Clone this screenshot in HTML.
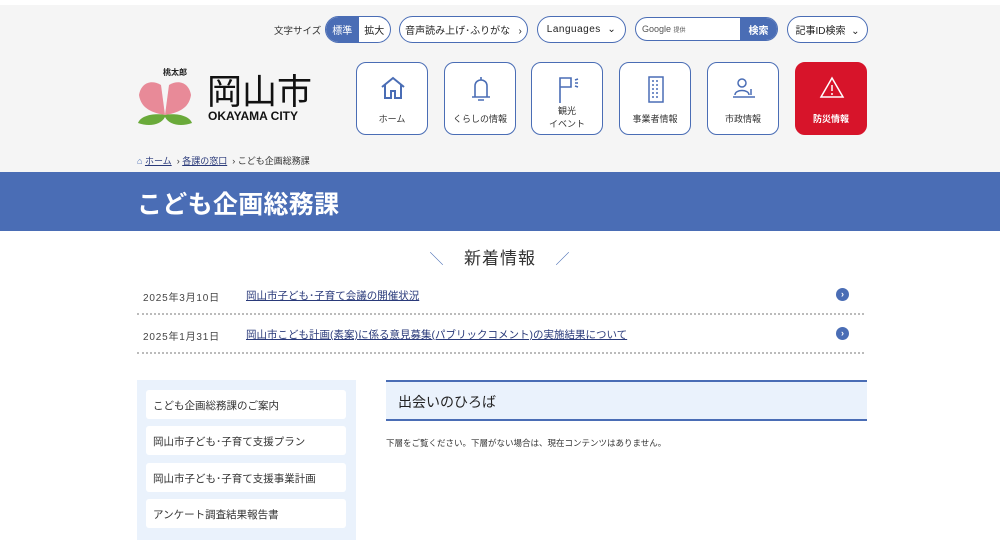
<!DOCTYPE html>
<html><head><meta charset="utf-8"><style>
*{box-sizing:border-box;margin:0;padding:0}
body{width:1000px;height:540px;overflow:hidden;background:#fff;font-family:"Liberation Sans","Noto Sans CJK JP",sans-serif;color:#333;position:relative}
.a{position:absolute}
.hdr{left:0;top:5px;width:1000px;height:167px;background:#f5f5f5}
.pill{position:absolute;top:16px;height:27px;border:1px solid #4a6db5;border-radius:14px;background:#fff;font-size:10px;color:#222;display:flex;align-items:center;justify-content:center}
.nav{position:absolute;top:62px;width:72px;height:73px;border:1.5px solid #4a6db5;border-radius:10px;background:#fff;font-size:9px;color:#333;text-align:center}
.nav svg{position:absolute;left:23px;top:12px}
.nav span{position:absolute;left:0;right:0;top:49px}
.band{left:0;top:172px;width:1000px;height:59px;background:#4a6db5;color:#fff;font-size:25px;font-weight:bold;padding:13px 0 0 137px;letter-spacing:.3px}
.news{left:137px;width:727px;height:39px;border-bottom:2px dotted #bbb;font-size:10px}
.news .d{position:absolute;left:6px;top:13px;letter-spacing:.8px;color:#444}
.news .t{position:absolute;left:109px;top:12px;text-decoration:underline;font-size:10.5px;color:#2a3a7a}
.news .c{position:absolute;right:15px;top:12px;width:13px;height:13px;border-radius:50%;background:#4a6db5;color:#fff;font-size:9px;line-height:13px;text-align:center;font-weight:bold}
.side{left:137px;top:380px;width:219px;height:160px;background:#eaf2fc}
.si{position:absolute;left:9px;width:200px;height:29px;background:#fff;border-radius:3px;font-size:10.5px;padding:8px 0 0 7px;color:#333}
</style></head><body>
<div class="a hdr"></div>
<div class="a" style="left:274px;top:23px;font-size:9.5px">文字サイズ</div>
<div class="pill" style="left:325px;width:66px;justify-content:flex-start;overflow:hidden"><div style="width:33px;height:100%;background:#4a6db5;color:#fff;display:flex;align-items:center;justify-content:center">標準</div><div style="width:32px;text-align:center">拡大</div></div>
<div class="pill" style="left:399px;width:129px">音声読み上げ･ふりがな&nbsp;&nbsp;&nbsp;›</div>
<div class="pill" style="left:537px;width:89px;letter-spacing:.5px">Languages&nbsp;&nbsp;⌄</div>
<div class="pill" style="left:635px;width:143px;justify-content:flex-start;overflow:hidden;height:24px;top:17px"><span style="flex:1;padding-left:6px;font-size:9px;color:#555">Google <span style="font-size:6px">提供</span></span><span style="width:37px;height:100%;background:#4a6db5;color:#fff;display:flex;align-items:center;justify-content:center;font-weight:bold">検索</span></div>
<div class="pill" style="left:787px;width:81px">記事ID検索&nbsp;&nbsp;⌄</div>

<svg class="a" style="left:135px;top:65px" width="60" height="66" viewBox="0 0 60 66">
<path d="M4 30 C6 18 16 14 26 20 L30 50 C18 48 6 44 4 30Z" fill="#e88a98"/>
<path d="M56 30 C54 18 44 14 34 20 L30 50 C42 48 54 44 56 30Z" fill="#e88a98"/>
<path d="M30 50 C20 48 6 50 3 58 C14 62 26 60 30 52Z" fill="#6aaa3a"/>
<path d="M30 50 C40 48 54 50 57 58 C46 62 34 60 30 52Z" fill="#6aaa3a"/>
<text x="28" y="10" font-size="8" font-weight="bold" fill="#222">桃太郎</text>
</svg>
<div class="a" style="left:207px;top:71px;font-size:35px;line-height:38px;color:#111;font-family:'Noto Sans CJK JP',sans-serif">岡山市</div>
<div class="a" style="left:208px;top:109px;font-size:12px;font-weight:bold;color:#111">OKAYAMA CITY</div>

<div class="nav" style="left:356px"><svg width="26" height="26" viewBox="0 0 26 26" fill="none" stroke="#4a6db5" stroke-width="2"><path d="M2 12 L13 3 L24 12 M5 10 V23 H11 V16 H15 V23 H21 V10"/></svg><span>ホーム</span></div>
<div class="nav" style="left:444px"><svg width="26" height="30" viewBox="0 0 26 30" fill="none" stroke="#4a6db5" stroke-width="1.6"><path d="M13 2 V5 M7 22 V11 C7 7 10 5 13 5 C16 5 19 7 19 11 V22 M4 22 H22 M10 25 H16"/></svg><span>くらしの情報</span></div>
<div class="nav" style="left:531px"><svg width="26" height="30" viewBox="0 0 26 30" fill="none" stroke="#4a6db5" stroke-width="1.6"><path d="M5 28 V3 H16 V12 H5 M20 5 L23 4 M20 8 H23 M20 11 L23 12"/></svg><span style="top:42px;line-height:13px">観光<br>イベント</span></div>
<div class="nav" style="left:619px"><svg width="26" height="30" viewBox="0 0 26 30" fill="none" stroke="#4a6db5" stroke-width="1.5"><rect x="6" y="2" width="14" height="25"/><path d="M9 6h2M13 6h2M9 10h2M13 10h2M9 14h2M13 14h2M9 18h2M13 18h2M9 22h2M13 22h2"/></svg><span>事業者情報</span></div>
<div class="nav" style="left:707px"><svg width="26" height="30" viewBox="0 0 26 30" fill="none" stroke="#4a6db5" stroke-width="1.5"><circle cx="11" cy="8" r="4"/><path d="M4 20 C4 14 18 14 18 20 M2 22 H24 M20 14 V20"/></svg><span>市政情報</span></div>
<div class="nav" style="left:795px;background:#d7142a;border-color:#d7142a;color:#fff;font-weight:bold"><svg width="26" height="26" viewBox="0 0 26 26" fill="none" stroke="#fff" stroke-width="1.5"><path d="M13 3 L24 22 H2 Z M13 10 V16 M13 18 V20"/></svg><span>防災情報</span></div>

<div class="a" style="left:137px;top:154px;font-size:9px;color:#333"><span style="color:#4a6db5">⌂</span> <u style="color:#2a3a7a">ホーム</u> &nbsp;› <u style="color:#2a3a7a">各課の窓口</u> &nbsp;› こども企画総務課</div>
<div class="a band">こども企画総務課</div>

<div class="a" style="left:0;width:1000px;top:244px;text-align:center;font-size:17px;color:#333;letter-spacing:1px"><span style="color:#4a6db5;font-size:14px">＼&nbsp;&nbsp;&nbsp;&nbsp;</span>新着情報<span style="color:#4a6db5;font-size:14px">&nbsp;&nbsp;&nbsp;&nbsp;／</span></div>
<div class="a news" style="top:276px"><span class="d">2025年3月10日</span><span class="t">岡山市子ども･子育て会議の開催状況</span><span class="c">›</span></div>
<div class="a news" style="top:315px"><span class="d">2025年1月31日</span><span class="t">岡山市こども計画(素案)に係る意見募集(パブリックコメント)の実施結果について</span><span class="c">›</span></div>

<div class="a side">
<div class="si" style="top:10px">こども企画総務課のご案内</div>
<div class="si" style="top:46px">岡山市子ども･子育て支援プラン</div>
<div class="si" style="top:83px">岡山市子ども･子育て支援事業計画</div>
<div class="si" style="top:119px">アンケート調査結果報告書</div>
</div>
<div class="a" style="left:386px;top:380px;width:481px;height:41px;background:#eaf2fc;border-top:2px solid #4a6db5;border-bottom:2px solid #4a6db5;font-size:14px;padding:10px 0 0 12px;color:#222">出会いのひろば</div>
<div class="a" style="left:386px;top:437px;font-size:8.5px;color:#333">下層をご覧ください。下層がない場合は、現在コンテンツはありません。</div>
</body></html>
